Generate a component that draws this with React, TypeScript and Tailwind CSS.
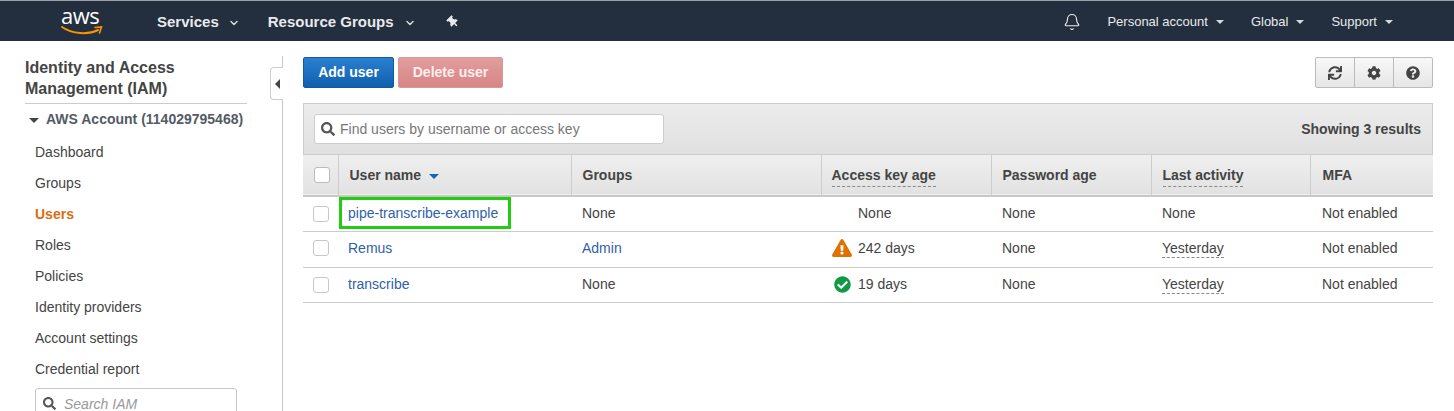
import { Bell, ChevronDown } from 'lucide-react';
import { FaCheckCircle, FaCog, FaExclamationTriangle, FaQuestionCircle, FaSearch, FaSync, FaThumbtack } from 'react-icons/fa';

const navItems = ['Dashboard', 'Groups', 'Users', 'Roles', 'Policies', 'Identity providers', 'Account settings', 'Credential report'];

const rows = [
  { name: 'pipe-transcribe-example', group: 'None', age: 'None', icon: null, last: 'None', h: 'h-[35px]', boxed: true },
  { name: 'Remus', group: 'Admin', age: '242 days', icon: 'warn', last: 'Yesterday', h: 'h-[36px] [&>td]:pb-[2px]', boxed: false },
  { name: 'transcribe', group: 'None', age: '19 days', icon: 'ok', last: 'Yesterday', h: 'h-[35px]', boxed: false },
];

function Caret() {
  return <span className="ml-[8px] inline-block h-0 w-0 border-x-[4px] border-t-[4px] border-x-transparent border-t-[#d5dbdb]" />;
}

export default function App() {
  return (
    <div className="h-[411px] w-[1454px] overflow-hidden bg-white font-['Liberation_Sans',Arial,sans-serif] text-[14px] text-[#444]">
      {/* top bar */}
      <div className="flex h-[41px] items-center border-t border-[#9aa0a6] bg-[#232f3e] pt-[2px] text-white">
        <div className="relative ml-[61px] h-[38px] w-[41px]">
          <span className="absolute left-0 top-0 font-['Open_Sans',sans-serif] text-[22px] leading-[24px] tracking-[-0.5px]">aws</span>
          <svg className="absolute left-0 top-[21px]" width="42" height="12" viewBox="0 0 42 12" fill="none">
            <path d="M1 3 C11 10 27 11 37 6" stroke="#f79400" strokeWidth="2" strokeLinecap="round" />
            <path d="M34 3.5 L40.5 3 L38.5 9" stroke="#f79400" strokeWidth="1.6" strokeLinecap="round" />
          </svg>
        </div>
        <span className="ml-[55px] text-[15px] font-bold text-[#e8eaec]">Services</span>
        <ChevronDown size={12} strokeWidth={3} className="ml-[9px] mt-[2px] text-[#d5dbdb]" />
        <span className="ml-[28px] text-[15px] font-bold text-[#e8eaec]">Resource Groups</span>
        <ChevronDown size={12} strokeWidth={3} className="ml-[10px] mt-[2px] text-[#d5dbdb]" />
        <FaThumbtack size={12} className="ml-[31px] -rotate-45 text-[#e8eaec]" />
        <Bell size={18} strokeWidth={1.5} className="ml-auto text-[#eee]" />
        <span className="ml-[26px] text-[13px] text-[#e8eaec]">Personal account</span>
        <Caret />
        <span className="ml-[27px] text-[13px] text-[#e8eaec]">Global</span>
        <Caret />
        <span className="ml-[27px] text-[13px] text-[#e8eaec]">Support</span>
        <Caret />
        <span className="w-[61px]" />
      </div>

      <div className="flex">
        {/* sidebar */}
        <div className="relative mt-[15px] h-[355px] w-[283px] shrink-0 border-r border-[#c8c8c8] pl-[25px] pt-[1px]">
          <div className="w-[222px] border-b border-[#ccc] pb-[4px] text-[16px] font-bold leading-[21px] text-[#444]">
            Identity and Access
            <br />
            Management (IAM)
          </div>
          <div className="ml-[4px] mt-[5px] flex h-[20px] items-center text-[14px] font-bold text-[#545b64]">
            <span className="mr-[7px] mt-[2px] h-0 w-0 border-x-[5px] border-t-[5px] border-x-transparent border-t-[#444]" />
            AWS Account (114029795468)
          </div>
          <div className="mt-[8px] flex flex-col pl-[10px]">
            {navItems.map((n) => (
              <div key={n} className={`flex h-[31px] items-center ${n === 'Users' ? 'font-bold text-[#dd6b10]' : 'text-[#444]'}`}>
                {n}
              </div>
            ))}
          </div>
          <div className="ml-[10px] mt-[3px] flex h-[40px] w-[202px] items-start gap-[8px] rounded-[3px] border border-[#c8c8c8] pl-[7px] pt-[5px] text-[14px] italic text-[#999]">
            <FaSearch size={13} className="mt-[3px] text-[#555]" />
            Search IAM
          </div>
          {/* collapse tab */}
          <div className="absolute left-[270px] top-[11px] flex h-[33px] w-[13px] items-center justify-center rounded-l-[4px] border border-r-0 border-[#ccc] bg-white">
            <span className="h-0 w-0 border-y-[5px] border-r-[5px] border-y-transparent border-r-[#444]" />
          </div>
        </div>

        {/* main */}
        <div className="ml-[20px] w-[1130px] pt-[16px]">
          <div className="flex h-[31px] items-center">
            <button className="h-[31px] w-[91px] rounded-[2px] border border-[#125a9c] bg-gradient-to-b from-[#2a7fd0] to-[#0f5fae] text-[14px] font-bold text-white">
              Add user
            </button>
            <button className="ml-[4px] h-[31px] w-[105px] rounded-[2px] border border-[#d39a9a] bg-gradient-to-b from-[#e29d9d] to-[#d78585] text-[14px] font-bold text-[#fbeeee]">
              Delete user
            </button>
            <div className="ml-auto flex h-[31px] w-[118px] rounded-[2px] border border-[#bbb] bg-gradient-to-b from-[#f8f8f8] to-[#e6e6e6] text-[#444]">
              <div className="flex flex-1 items-center justify-center border-r border-[#bbb]"><FaSync size={14} /></div>
              <div className="flex flex-1 items-center justify-center border-r border-[#bbb]"><FaCog size={14} /></div>
              <div className="flex flex-1 items-center justify-center"><FaQuestionCircle size={14} /></div>
            </div>
          </div>

          <div className="mt-[15px] flex h-[52px] items-center border border-[#ccc] bg-gradient-to-b from-[#ececec] to-[#e0e0e0] pl-[10px] pr-[11px]">
            <div className="flex h-[30px] w-[350px] items-center rounded-[3px] border border-[#ccc] bg-white pl-[6px] text-[14px] text-[#777]">
              <FaSearch size={14} className="mr-[5px] text-[#555]" />
              Find users by username or access key
            </div>
            <span className="ml-auto text-[14px] font-bold text-[#444]">Showing 3 results</span>
          </div>

          <table className="w-[1130px] table-fixed border-collapse">
            <colgroup>
              <col className="w-[35px]" />
              <col className="w-[233px]" />
              <col className="w-[250px]" />
              <col className="w-[170px]" />
              <col className="w-[160px]" />
              <col className="w-[159px]" />
              <col className="w-[123px]" />
            </colgroup>
            <thead>
              <tr className="h-[41px] border-b-2 border-[#c8c8c8] bg-gradient-to-b from-[#efefef] to-[#e2e2e2] text-left font-bold">
                <th className="pl-[11px]"><div className="h-[16px] w-[16px] rounded-[3px] border border-[#bbb] bg-white" /></th>
                <th className="border-l border-[#ccc] pl-[11px] font-bold">
                  <span className="flex items-center">
                    User name
                    <span className="ml-[8px] mt-[2px] h-0 w-0 border-x-[5px] border-t-[5px] border-x-transparent border-t-[#1166bb]" />
                  </span>
                </th>
                <th className="border-l border-[#ccc] pl-[11px] font-bold">Groups</th>
                <th className="border-l border-[#ccc] pl-[10px] font-bold"><span className="border-b border-dashed border-[#888] pb-[3px]">Access key age</span></th>
                <th className="border-l border-[#ccc] pl-[11px] font-bold">Password age</th>
                <th className="border-l border-[#ccc] pl-[11px] font-bold"><span className="border-b border-dashed border-[#888] pb-[3px]">Last activity</span></th>
                <th className="border-l border-[#ccc] pl-[12px] font-bold">MFA</th>
              </tr>
            </thead>
            <tbody>
              {rows.map((r) => (
                <tr key={r.name} className={`${r.h} border-b border-[#ccc]`}>
                  <td className="pl-[10px]"><div className="h-[16px] w-[16px] rounded-[3px] border border-[#c8c8c8] bg-white" /></td>
                  <td className="pl-[10px]">
                    <span className={`relative text-[#2f5fa8] ${r.boxed ? "after:absolute after:-left-[9px] after:-right-[13px] after:-inset-y-[8px] after:border-[3px] after:border-[#22cc11] after:content-['']" : ''}`}>
                      {r.name}
                    </span>
                  </td>
                  <td className={`pl-[11px] ${r.group === 'Admin' ? 'text-[#2f5fa8]' : ''}`}>{r.group}</td>
                  <td className="pl-[11px]">
                    <span className="flex items-center">
                      <span className="flex w-[26px] shrink-0 items-center">
                        {r.icon === 'warn' && <FaExclamationTriangle size={20} className="text-[#e07000]" />}
                        {r.icon === 'ok' && <FaCheckCircle size={17} className="ml-[2px] text-[#119944]" />}
                      </span>
                      {r.age}
                    </span>
                  </td>
                  <td className="pl-[11px]">None</td>
                  <td className="pl-[11px]">
                    {r.last === 'Yesterday' ? <span className="border-b border-dashed border-[#888] pb-[1px]">{r.last}</span> : r.last}
                  </td>
                  <td className="pl-[12px]">Not enabled</td>
                </tr>
              ))}
            </tbody>
          </table>
        </div>
      </div>
    </div>
  );
}
